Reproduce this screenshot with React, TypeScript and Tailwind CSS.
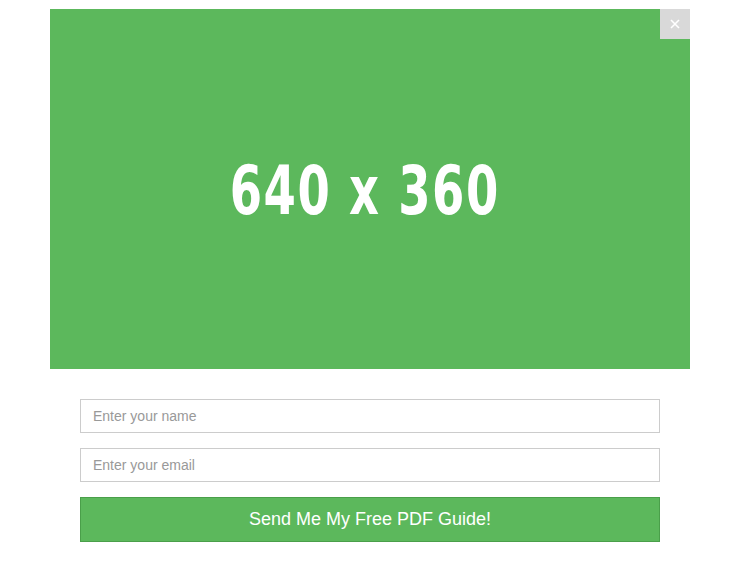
import React from "react";

export default function App() {
  return (
    <div className="w-[740px] h-[580px] bg-white relative" style={{ fontFamily: '"Liberation Sans", Arial, sans-serif' }}>
      <div className="pt-[9px] px-[50px]">
        <div className="relative w-[640px] h-[360px] bg-[#5cb85c] flex items-center justify-center">
          <span
            className="text-white font-bold text-[68px] leading-none tracking-[2px] mt-[4px] mr-[10px] scale-x-[0.76] whitespace-nowrap"
            style={{ fontFamily: '"DejaVu Sans Condensed", "DejaVu Sans", sans-serif', fontStretch: "condensed" }}
          >
            640 x 360
          </span>
          <button className="absolute top-0 right-0 w-[30px] h-[30px] bg-[#d9d9d9] flex items-center justify-center">
            <svg width="10" height="10" viewBox="0 0 10 10">
              <path d="M1 1L9 9M9 1L1 9" stroke="white" strokeWidth="1.6" />
            </svg>
          </button>
        </div>
      </div>
      <div className="px-[80px] pt-[30px] flex flex-col">
        <input
          placeholder="Enter your name"
          className="h-[34px] w-full border border-[#cccccc] px-[12px] text-[14px] text-[#555] placeholder:text-[#999] outline-none"
        />
        <input
          placeholder="Enter your email"
          className="mt-[15px] h-[34px] w-full border border-[#cccccc] px-[12px] text-[14px] text-[#555] placeholder:text-[#999] outline-none"
        />
        <button className="mt-[15px] h-[45px] w-full bg-[#5cb85c] border border-[#4a9f4a] text-white text-[18px]">
          Send Me My Free PDF Guide!
        </button>
      </div>
    </div>
  );
}
